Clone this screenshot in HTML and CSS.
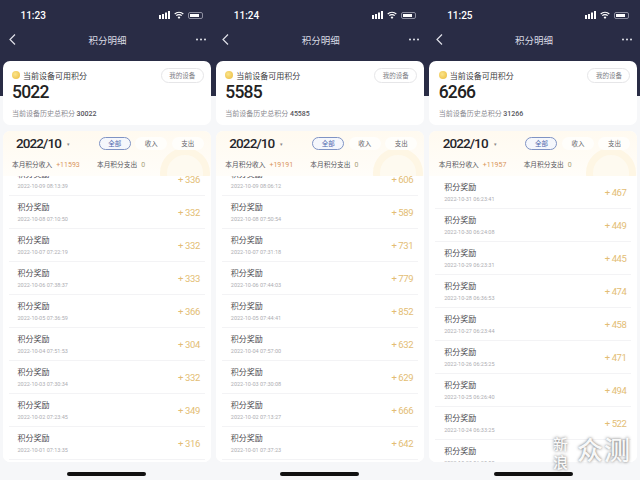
FILE: index.html
```html
<!DOCTYPE html>
<html lang="zh-CN">
<head>
    <meta charset="UTF-8">
    <title>积分明细</title>
    <link rel="stylesheet" href="styles.css">
</head>
<body>
    <div class="page">
        <!-- Phone 1 -->
        <div class="phone">
            <div class="status">
                <span class="time">11:23</span>
                <span class="status-icons">
                    <svg width="11" height="8" viewBox="0 0 11 8"><path fill="#fff" d="M0 4h2v4H0zM3 3h2v5H3zM6 1.5h2V8H6zM9 0h2v8H9z"/></svg>
                    <svg width="10" height="8" viewBox="0 0 10 8"><path fill="none" stroke="#fff" stroke-width="1.2" d="M.7 3A6.2 6.2 0 0 1 9.3 3M2.3 4.7a3.8 3.8 0 0 1 5.4 0"/><path fill="#fff" d="M5 8 3.6 6.3a2 2 0 0 1 2.8 0z"/></svg>
                    <span class="battery"><span class="battery-level"></span></span>
                </span>
            </div>
            <div class="nav">
                <svg class="back" width="7" height="11" viewBox="0 0 7 11"><path fill="none" stroke="#dfe1e8" stroke-width="1.2" d="M6 .5 1 5.5l5 5"/></svg>
                <span class="nav-title">积分明细</span>
                <svg class="more" width="10" height="3" viewBox="0 0 10 3"><circle cx="1" cy="1.5" r="1" fill="#e4e5ec"/><circle cx="5" cy="1.5" r="1" fill="#e4e5ec"/><circle cx="9" cy="1.5" r="1" fill="#e4e5ec"/></svg>
            </div>
            <div class="card">
                <div class="card-label"><span class="coin"></span>当前设备可用积分</div>
                <div class="card-value">5022</div>
                <div class="card-history">当前设备历史总积分 <b>30022</b></div>
                <span class="device-btn">我的设备</span>
            </div>
            <div class="panel">
                <div class="panel-head">
                    <span class="ring"></span>
                    <div class="panel-top">
                        <span class="month">2022/10</span><span class="caret">&#9662;</span>
                        <span class="tabs"><span class="tab tab-on">全部</span><span class="tab">收入</span><span class="tab">支出</span></span>
                    </div>
                    <div class="summary"><span class="summary-in">本月积分收入<em class="income">+11593</em></span><span>本月积分支出<em class="spent">0</em></span></div>
                </div>
                <div class="list">
                    <div class="row row-cut"><div><p class="row-title">积分奖励</p><p class="row-date">2022-10-09 08:13:39</p></div><span class="amount">+ 336</span></div>
                    <div class="row"><div><p class="row-title">积分奖励</p><p class="row-date">2022-10-08 07:10:50</p></div><span class="amount">+ 332</span></div>
                    <div class="row"><div><p class="row-title">积分奖励</p><p class="row-date">2022-10-07 07:22:19</p></div><span class="amount">+ 332</span></div>
                    <div class="row"><div><p class="row-title">积分奖励</p><p class="row-date">2022-10-06 07:38:37</p></div><span class="amount">+ 333</span></div>
                    <div class="row"><div><p class="row-title">积分奖励</p><p class="row-date">2022-10-05 07:36:59</p></div><span class="amount">+ 366</span></div>
                    <div class="row"><div><p class="row-title">积分奖励</p><p class="row-date">2022-10-04 07:51:53</p></div><span class="amount">+ 304</span></div>
                    <div class="row"><div><p class="row-title">积分奖励</p><p class="row-date">2022-10-03 07:30:34</p></div><span class="amount">+ 332</span></div>
                    <div class="row"><div><p class="row-title">积分奖励</p><p class="row-date">2022-10-02 07:23:45</p></div><span class="amount">+ 349</span></div>
                    <div class="row"><div><p class="row-title">积分奖励</p><p class="row-date">2022-10-01 07:13:35</p></div><span class="amount">+ 316</span></div>
                </div>
            </div>
            <div class="home-bar"></div>
        </div>

        <!-- Phone 2 -->
        <div class="phone">
            <div class="status">
                <span class="time">11:24</span>
                <span class="status-icons">
                    <svg width="11" height="8" viewBox="0 0 11 8"><path fill="#fff" d="M0 4h2v4H0zM3 3h2v5H3zM6 1.5h2V8H6zM9 0h2v8H9z"/></svg>
                    <svg width="10" height="8" viewBox="0 0 10 8"><path fill="none" stroke="#fff" stroke-width="1.2" d="M.7 3A6.2 6.2 0 0 1 9.3 3M2.3 4.7a3.8 3.8 0 0 1 5.4 0"/><path fill="#fff" d="M5 8 3.6 6.3a2 2 0 0 1 2.8 0z"/></svg>
                    <span class="battery"><span class="battery-level"></span></span>
                </span>
            </div>
            <div class="nav">
                <svg class="back" width="7" height="11" viewBox="0 0 7 11"><path fill="none" stroke="#dfe1e8" stroke-width="1.2" d="M6 .5 1 5.5l5 5"/></svg>
                <span class="nav-title">积分明细</span>
                <svg class="more" width="10" height="3" viewBox="0 0 10 3"><circle cx="1" cy="1.5" r="1" fill="#e4e5ec"/><circle cx="5" cy="1.5" r="1" fill="#e4e5ec"/><circle cx="9" cy="1.5" r="1" fill="#e4e5ec"/></svg>
            </div>
            <div class="card">
                <div class="card-label"><span class="coin"></span>当前设备可用积分</div>
                <div class="card-value">5585</div>
                <div class="card-history">当前设备历史总积分 <b>45585</b></div>
                <span class="device-btn">我的设备</span>
            </div>
            <div class="panel">
                <div class="panel-head">
                    <span class="ring"></span>
                    <div class="panel-top">
                        <span class="month">2022/10</span><span class="caret">&#9662;</span>
                        <span class="tabs"><span class="tab tab-on">全部</span><span class="tab">收入</span><span class="tab">支出</span></span>
                    </div>
                    <div class="summary"><span class="summary-in">本月积分收入<em class="income">+19191</em></span><span>本月积分支出<em class="spent">0</em></span></div>
                </div>
                <div class="list">
                    <div class="row row-cut"><div><p class="row-title">积分奖励</p><p class="row-date">2022-10-09 08:06:12</p></div><span class="amount">+ 606</span></div>
                    <div class="row"><div><p class="row-title">积分奖励</p><p class="row-date">2022-10-08 07:50:54</p></div><span class="amount">+ 589</span></div>
                    <div class="row"><div><p class="row-title">积分奖励</p><p class="row-date">2022-10-07 07:31:18</p></div><span class="amount">+ 731</span></div>
                    <div class="row"><div><p class="row-title">积分奖励</p><p class="row-date">2022-10-06 07:44:03</p></div><span class="amount">+ 779</span></div>
                    <div class="row"><div><p class="row-title">积分奖励</p><p class="row-date">2022-10-05 07:44:41</p></div><span class="amount">+ 852</span></div>
                    <div class="row"><div><p class="row-title">积分奖励</p><p class="row-date">2022-10-04 07:57:00</p></div><span class="amount">+ 632</span></div>
                    <div class="row"><div><p class="row-title">积分奖励</p><p class="row-date">2022-10-03 07:30:08</p></div><span class="amount">+ 629</span></div>
                    <div class="row"><div><p class="row-title">积分奖励</p><p class="row-date">2022-10-02 07:13:27</p></div><span class="amount">+ 666</span></div>
                    <div class="row"><div><p class="row-title">积分奖励</p><p class="row-date">2022-10-01 07:37:23</p></div><span class="amount">+ 642</span></div>
                </div>
            </div>
            <div class="home-bar"></div>
        </div>

        <!-- Phone 3 -->
        <div class="phone">
            <div class="status">
                <span class="time">11:25</span>
                <span class="status-icons">
                    <svg width="11" height="8" viewBox="0 0 11 8"><path fill="#fff" d="M0 4h2v4H0zM3 3h2v5H3zM6 1.5h2V8H6zM9 0h2v8H9z"/></svg>
                    <svg width="10" height="8" viewBox="0 0 10 8"><path fill="none" stroke="#fff" stroke-width="1.2" d="M.7 3A6.2 6.2 0 0 1 9.3 3M2.3 4.7a3.8 3.8 0 0 1 5.4 0"/><path fill="#fff" d="M5 8 3.6 6.3a2 2 0 0 1 2.8 0z"/></svg>
                    <span class="battery"><span class="battery-level"></span></span>
                </span>
            </div>
            <div class="nav">
                <svg class="back" width="7" height="11" viewBox="0 0 7 11"><path fill="none" stroke="#dfe1e8" stroke-width="1.2" d="M6 .5 1 5.5l5 5"/></svg>
                <span class="nav-title">积分明细</span>
                <svg class="more" width="10" height="3" viewBox="0 0 10 3"><circle cx="1" cy="1.5" r="1" fill="#e4e5ec"/><circle cx="5" cy="1.5" r="1" fill="#e4e5ec"/><circle cx="9" cy="1.5" r="1" fill="#e4e5ec"/></svg>
            </div>
            <div class="card">
                <div class="card-label"><span class="coin"></span>当前设备可用积分</div>
                <div class="card-value">6266</div>
                <div class="card-history">当前设备历史总积分 <b>31266</b></div>
                <span class="device-btn">我的设备</span>
            </div>
            <div class="panel">
                <div class="panel-head">
                    <span class="ring"></span>
                    <div class="panel-top">
                        <span class="month">2022/10</span><span class="caret">&#9662;</span>
                        <span class="tabs"><span class="tab tab-on">全部</span><span class="tab">收入</span><span class="tab">支出</span></span>
                    </div>
                    <div class="summary"><span class="summary-in">本月积分收入<em class="income">+11957</em></span><span>本月积分支出<em class="spent">0</em></span></div>
                </div>
                <div class="list">
                    <div class="row"><div><p class="row-title">积分奖励</p><p class="row-date">2022-10-31 06:23:41</p></div><span class="amount">+ 467</span></div>
                    <div class="row"><div><p class="row-title">积分奖励</p><p class="row-date">2022-10-30 06:24:08</p></div><span class="amount">+ 449</span></div>
                    <div class="row"><div><p class="row-title">积分奖励</p><p class="row-date">2022-10-29 06:23:31</p></div><span class="amount">+ 445</span></div>
                    <div class="row"><div><p class="row-title">积分奖励</p><p class="row-date">2022-10-28 06:36:53</p></div><span class="amount">+ 474</span></div>
                    <div class="row"><div><p class="row-title">积分奖励</p><p class="row-date">2022-10-27 06:23:44</p></div><span class="amount">+ 458</span></div>
                    <div class="row"><div><p class="row-title">积分奖励</p><p class="row-date">2022-10-26 06:25:25</p></div><span class="amount">+ 471</span></div>
                    <div class="row"><div><p class="row-title">积分奖励</p><p class="row-date">2022-10-25 06:26:40</p></div><span class="amount">+ 494</span></div>
                    <div class="row"><div><p class="row-title">积分奖励</p><p class="row-date">2022-10-24 06:33:25</p></div><span class="amount">+ 522</span></div>
                    <div class="row"><div><p class="row-title">积分奖励</p><p class="row-date">2022-10-23 06:25:50</p></div></div>
                </div>
            </div>
            <div class="home-bar"></div>
            <div class="watermark"><span class="wm-small">新<br>浪</span><span class="wm-big">众测</span></div>
        </div>
    </div>
</body>
</html>
```

FILE: styles.css
```css
* {
    box-sizing: border-box;
}

html, body {
    margin: 0;
    padding: 0;
}

body {
    width: 640px;
    height: 480px;
    overflow: hidden;
    font-family: "Noto Sans CJK SC", "Noto Sans", sans-serif;
    background-color: #f5f6f8;
}

.page {
    display: flex;
    height: 480px;
}

.phone {
    position: relative;
    display: flex;
    flex-direction: column;
    width: 213.33px;
    height: 480px;
    padding: 0 2.5px;
    background: linear-gradient(#292c45 96px, #f6f7f9 96px);
}

.status {
    display: flex;
    align-items: center;
    justify-content: space-between;
    height: 30px;
    padding: 0 8px 0 18px;
}

.time {
    font-family: Roboto, sans-serif;
    font-size: 10px;
    font-weight: 500;
    color: #fff;
}

.status-icons {
    display: flex;
    align-items: center;
    gap: 4px;
}

.battery {
    display: block;
    width: 15px;
    height: 7px;
    padding: 1px;
    border: 1px solid #8c8e9f;
    border-radius: 2px;
}

.battery-level {
    display: block;
    width: 9px;
    height: 100%;
    background-color: #fff;
}

.nav {
    display: grid;
    grid-template-columns: 1fr auto 1fr;
    align-items: center;
    height: 19px;
    padding: 0 5px 0 6.5px;
}

.nav-title {
    font-size: 9.5px;
    color: #d9dbe4;
}

.more {
    justify-self: end;
}

.card {
    position: relative;
    height: 64px;
    margin-top: 12px;
    padding: 7px 8px 0 9.5px;
    background-color: #fff;
    border-radius: 7px;
}

.card-label {
    display: flex;
    align-items: center;
    gap: 3px;
    height: 14px;
    font-size: 8px;
    color: #3a3a40;
}

.coin {
    width: 8px;
    height: 8px;
    border-radius: 50%;
    background: radial-gradient(circle at 40% 40%, #fbe58c, #eab93a);
}

.card-value {
    height: 21px;
    font-family: Roboto, sans-serif;
    font-size: 17.5px;
    line-height: 21px;
    font-weight: 500;
    letter-spacing: -0.8px;
    color: #222;
}

.card-history {
    margin-top: 5px;
    font-size: 7px;
    color: #8b8b92;
}

.card-history b {
    font-family: Roboto, sans-serif;
    font-size: 7px;
    font-weight: 500;
    color: #55555c;
}

.device-btn {
    position: absolute;
    top: 7px;
    right: 7px;
    width: 43px;
    height: 15px;
    border: 1.5px solid #e6e6e8;
    border-radius: 8px;
    font-size: 6.5px;
    line-height: 12px;
    text-align: center;
    color: #808086;
}

.panel {
    height: 331px;
    margin-top: 6px;
    overflow: hidden;
    background-color: #fff;
    border-radius: 7px;
}

.panel-head {
    position: relative;
    height: 45px;
    padding: 0 7px 0 9.5px;
    overflow: hidden;
    background: linear-gradient(#fffaf0, #fffdf9);
}

.panel-top {
    position: relative;
    display: flex;
    align-items: center;
    height: 24px;
}

.month {
    padding-left: 4px;
    font-family: Roboto, sans-serif;
    font-size: 13.5px;
    font-weight: 500;
    letter-spacing: -0.9px;
    color: #26262b;
}

.caret {
    margin-left: 6px;
    font-size: 5px;
    color: #888;
}

.tabs {
    display: flex;
    gap: 4.5px;
    margin-left: auto;
}

.tab {
    width: 32px;
    height: 13px;
    border-radius: 7px;
    background-color: #fffefb;
    font-size: 6.5px;
    line-height: 13px;
    text-align: center;
    color: #66666c;
}

.tab-on {
    border: 1px solid #7f93c4;
    background-color: #f5f7fc;
    line-height: 11px;
    color: #4d68ad;
}

.summary {
    position: relative;
    display: flex;
    margin-top: 4px;
    font-size: 6.7px;
    color: #55555c;
}

.summary-in {
    width: 85px;
}

.summary em {
    margin-left: 4px;
    font-family: Roboto, sans-serif;
    font-size: 7px;
    font-style: normal;
}

.income {
    color: #d9955c;
}

.spent {
    color: #a8a27a;
}

.ring {
    position: absolute;
    top: 17px;
    right: 1px;
    width: 50px;
    height: 50px;
    border: 7px solid #fef6e4;
    border-radius: 50%;
    background-color: #fefaf0;
}

.list {
    height: 286px;
    padding: 0 6px;
    overflow: hidden;
    background-color: #fff;
}

.row {
    display: flex;
    align-items: center;
    justify-content: space-between;
    height: 33px;
    padding: 0 5px 0 9px;
    border-bottom: 1px solid #f3f3f5;
}

.row-cut {
    margin-top: -13px;
}

.row-title {
    margin: 0;
    font-size: 8px;
    line-height: 12px;
    color: #4b4b50;
}

.row-date {
    margin: 3.5px 0 0;
    font-family: Roboto, sans-serif;
    font-size: 5.5px;
    line-height: 7px;
    color: #adadb2;
}

.amount {
    font-family: Roboto, sans-serif;
    font-size: 9.5px;
    letter-spacing: -0.4px;
    color: #e3bd74;
}

.home-bar {
    position: absolute;
    left: 67px;
    bottom: 4px;
    width: 79px;
    height: 4px;
    border-radius: 2px;
    background-color: #111;
}

.watermark {
    position: absolute;
    right: 9px;
    bottom: 9px;
    display: flex;
    align-items: flex-start;
    gap: 9px;
    font-weight: 500;
    color: rgba(255, 255, 255, 0.95);
    text-shadow: 0 0 3px rgba(60, 60, 60, 0.8);
}

.wm-small {
    font-size: 15px;
    line-height: 18px;
}

.wm-big {
    font-size: 26px;
    line-height: 28px;
    letter-spacing: 1px;
}
```
